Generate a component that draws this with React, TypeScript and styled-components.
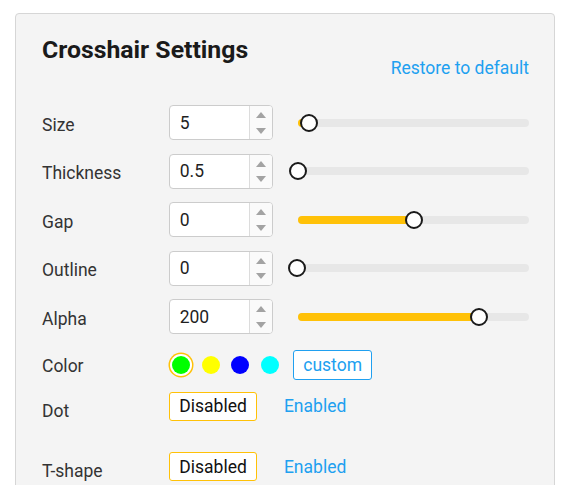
import React from "react";
import styled, { createGlobalStyle } from "styled-components";

const Global = createGlobalStyle`
  html, body { margin: 0; padding: 0; background: #ffffff; }
  body { font-family: Roboto, "Liberation Sans", sans-serif; -webkit-font-smoothing: antialiased; }
  * { box-sizing: border-box; }
`;

const Page = styled.div`
  padding: 13px 12px 0 15px;
  height: 485px;
  overflow: hidden;
`;

const Card = styled.section`
  width: 540px;
  background: #f4f4f4;
  border: 1px solid #d6d6d6;
  border-radius: 4px;
  padding: 20.5px 25px 40px 26px;
`;

const Header = styled.header`
  display: flex;
  justify-content: space-between;
  align-items: flex-start;
`;

const Title = styled.h1`
  margin: 0;
  font-size: 24.8px;
  line-height: 29px;
  font-weight: 700;
  color: #1a1a1a;
`;

const LinkButton = styled.button`
  margin-top: 23.5px;
  padding: 0;
  border: none;
  background: none;
  font: inherit;
  font-size: 17.5px;
  line-height: 20px;
  color: #20a0f0;
  cursor: pointer;
`;

const Rows = styled.div`
  display: flex;
  flex-direction: column;
  margin-top: 27px;
`;

const Row = styled.div<{ $mt: number }>`
  display: grid;
  grid-template-columns: 127px 1fr;
  align-items: start;
  margin-top: ${(p) => p.$mt}px;
`;

const Label = styled.div<{ $pt: number }>`
  padding-top: ${(p) => p.$pt}px;
  font-size: 17.5px;
  line-height: 20px;
  color: #333333;
`;

const Controls = styled.div`
  display: flex;
  align-items: center;
`;

const NumberBox = styled.div`
  display: flex;
  width: 103.5px;
  height: 35px;
  background: #ffffff;
  border: 1px solid #cccccc;
  border-radius: 4px;
  overflow: hidden;
  flex-shrink: 0;
`;

const NumberValue = styled.div`
  flex: 1;
  display: flex;
  align-items: center;
  padding-left: 9.7px;
  font-size: 17.5px;
  line-height: 20px;
  color: #1f1f1f;
`;

const Spinner = styled.div`
  width: 23px;
  display: flex;
  flex-direction: column;
  border-left: 1px solid #dcdcdc;
  background: #fafafa;
`;

const Arrow = styled.div<{ $up?: boolean }>`
  flex: 1;
  display: flex;
  align-items: center;
  justify-content: center;
  &::after {
    content: "";
    width: 0;
    height: 0;
    border-left: 5px solid transparent;
    border-right: 5px solid transparent;
    ${(p) =>
      p.$up
        ? "border-bottom: 6px solid #a3a3a3; margin-top: 2px;"
        : "border-top: 6px solid #a3a3a3; margin-bottom: 0px;"}
  }
`;

const Slider = styled.div`
  position: relative;
  flex: 1;
  height: 8px;
  margin-left: 25.5px;
  border-radius: 4px;
  background: #e7e7e7;
`;

const Fill = styled.div`
  position: absolute;
  left: 0;
  top: 0;
  bottom: 0;
  border-radius: 4px;
  background: #ffc107;
`;

const Thumb = styled.div`
  position: absolute;
  top: 50%;
  width: 18px;
  height: 18px;
  margin-left: -9px;
  margin-top: -9px;
  border-radius: 50%;
  background: #ffffff;
  border: 2px solid #1a1a1a;
`;

const Swatches = styled.div`
  display: flex;
  align-items: center;
  gap: 11.5px;
  padding-left: 3.2px;
  height: 30px;
`;

const Swatch = styled.div<{ $color: string; $selected?: boolean }>`
  width: 18px;
  height: 18px;
  border-radius: 50%;
  background: ${(p) => p.$color};
  box-shadow: ${(p) =>
    p.$selected ? "0 0 0 2px #ffffff, 0 0 0 3.5px #ffc107" : "none"};
`;

type Variant = "active" | "plain" | "outline";

const borderOf = (v: Variant) =>
  v === "active" ? "#ffc107" : v === "outline" ? "#20a0f0" : "transparent";

const Pill = styled.button<{ $variant: Variant }>`
  height: ${(p) => (p.$variant === "outline" ? 30 : 29)}px;
  padding: 0 9.3px;
  font-family: inherit;
  font-size: 17.5px;
  line-height: 20px;
  border-radius: 3px;
  cursor: pointer;
  border-width: 1px;
  border-style: solid;
  border-color: ${(p) => borderOf(p.$variant)};
  background: ${(p) => (p.$variant === "plain" ? "transparent" : "#ffffff")};
  color: ${(p) => (p.$variant === "active" ? "#111111" : "#20a0f0")};
`;

const Toggle = styled.div`
  display: flex;
  align-items: center;
  gap: 16.5px;
`;

const Custom = styled(Pill)`
  margin-left: 14.3px;
`;

type NumRow = { label: string; value: string; pct: number; fill: boolean };

const numberRows: NumRow[] = [
  { label: "Size", value: "5", pct: 4.8, fill: true },
  { label: "Thickness", value: "0.5", pct: 0, fill: false },
  { label: "Gap", value: "0", pct: 50, fill: true },
  { label: "Outline", value: "0", pct: -0.4, fill: false },
  { label: "Alpha", value: "200", pct: 78.4, fill: true },
];

const colors = ["#00ff00", "#ffff00", "#0000ff", "#00ffff"];

export default function App() {
  return (
    <Page>
      <Global />
      <Card>
        <Header>
          <Title>Crosshair Settings</Title>
          <LinkButton>Restore to default</LinkButton>
        </Header>
        <Rows>
          {numberRows.map((r, i) => (
            <Row key={r.label} $mt={i === 0 ? 0 : 13.5}>
              <Label $pt={9.7}>{r.label}</Label>
              <Controls>
                <NumberBox>
                  <NumberValue>{r.value}</NumberValue>
                  <Spinner>
                    <Arrow $up />
                    <Arrow />
                  </Spinner>
                </NumberBox>
                <Slider>
                  {r.fill && <Fill style={{ width: `${Math.max(r.pct, 0)}%` }} />}
                  <Thumb style={{ left: `${r.pct}%` }} />
                </Slider>
              </Controls>
            </Row>
          ))}
          <Row $mt={15.7}>
            <Label $pt={6.7}>Color</Label>
            <Controls>
              <Swatches>
                {colors.map((c, i) => (
                  <Swatch key={c} $color={c} $selected={i === 0} />
                ))}
              </Swatches>
              <Custom $variant="outline">custom</Custom>
            </Controls>
          </Row>
          <Row $mt={12}>
            <Label $pt={9.7}>Dot</Label>
            <Toggle>
              <Pill $variant="active">Disabled</Pill>
              <Pill $variant="plain">Enabled</Pill>
            </Toggle>
          </Row>
          <Row $mt={31}>
            <Label $pt={8.7}>T-shape</Label>
            <Toggle>
              <Pill $variant="active">Disabled</Pill>
              <Pill $variant="plain">Enabled</Pill>
            </Toggle>
          </Row>
        </Rows>
      </Card>
    </Page>
  );
}
